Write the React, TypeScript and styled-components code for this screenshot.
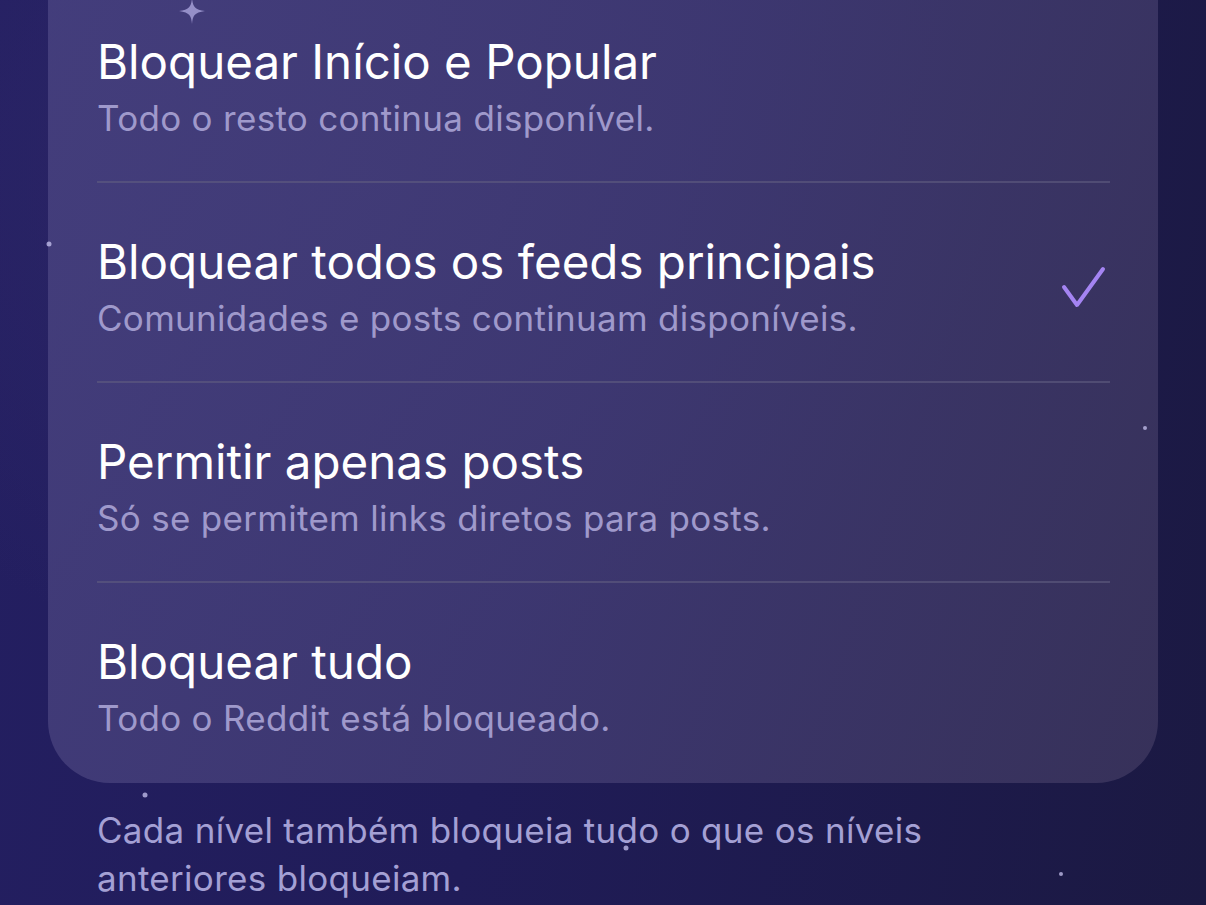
import React from "react";
import styled, { createGlobalStyle } from "styled-components";

const Global = createGlobalStyle`
  html, body { margin: 0; padding: 0; }
  body {
    width: 1206px;
    height: 905px;
    overflow: hidden;
    font-family: Inter, "Noto Sans", "Liberation Sans", sans-serif;
    -webkit-font-smoothing: antialiased;
  }
`;

const Screen = styled.div`
  position: relative;
  width: 1206px;
  height: 905px;
  overflow: hidden;
  background:
    radial-gradient(ellipse 900px 700px at 30% 20%, #2d2768 0%, rgba(45,39,104,0) 70%),
    linear-gradient(100deg, #241f62 0%, #201c58 45%, #1b1942 100%);
`;

const Content = styled.div`
  display: flex;
  flex-direction: column;
  gap: 23px;
  padding: 0 48px;
  margin-top: -17px;
`;

const Card = styled.div`
  border-radius: 0 0 62px 62px;
  background: linear-gradient(110deg, rgba(72, 66, 128, 0.85) 0%, rgba(65, 59, 116, 0.85) 50%, rgba(58, 52, 92, 0.9) 100%);
  padding: 0 48px 2px 49px;
`;

const Row = styled.div<{ $last?: boolean }>`
  display: flex;
  align-items: center;
  justify-content: space-between;
  padding: 54px 0 40px 0;
  border-bottom: ${(p) => (p.$last ? "none" : "2px solid rgba(96, 94, 128, 0.6)")};
`;

const Texts = styled.div`
  display: flex;
  flex-direction: column;
  gap: 8px;
`;

const Title = styled.div`
  font-size: 47.5px;
  line-height: 50px;
  color: #ffffff;
`;

const Subtitle = styled.div`
  font-size: 35px;
  line-height: 46px;
  color: #9f99cb;
  letter-spacing: 0.3px;
`;

const Check = styled.svg`
  width: 48px;
  height: 48px;
  margin-right: 4px;
  flex-shrink: 0;
`;

const Footer = styled.p`
  margin: 0 0 0 49px;
  width: 900px;
  font-size: 35px;
  line-height: 48px;
  color: #a4a0d4;
  letter-spacing: 0.3px;
`;

const Dot = styled.div<{ $x: number; $y: number; $s?: number }>`
  position: absolute;
  left: ${(p) => p.$x}px;
  top: ${(p) => p.$y}px;
  width: ${(p) => p.$s ?? 5}px;
  height: ${(p) => p.$s ?? 5}px;
  border-radius: 50%;
  background: rgba(200, 196, 240, 0.75);
  transform: translate(-50%, -50%);
`;

const Sparkle = styled.svg`
  position: absolute;
  left: 179px;
  top: -2px;
  width: 26px;
  height: 26px;
`;

const items = [
  { title: "Bloquear Início e Popular", sub: "Todo o resto continua disponível.", checked: false },
  { title: "Bloquear todos os feeds principais", sub: "Comunidades e posts continuam disponíveis.", checked: true },
  { title: "Permitir apenas posts", sub: "Só se permitem links diretos para posts.", checked: false },
  { title: "Bloquear tudo", sub: "Todo o Reddit está bloqueado.", checked: false },
];

const stars = [
  { x: 49, y: 244, s: 5 },
  { x: 145, y: 795, s: 5 },
  { x: 1145, y: 428, s: 4 },
  { x: 626, y: 848, s: 5 },
  { x: 1061, y: 874, s: 4 },
];

export default function App() {
  return (
    <>
      <Global />
      <Screen>
        <Content>
          <Card>
            {items.map((it, i) => (
              <Row key={it.title} $last={i === items.length - 1}>
                <Texts>
                  <Title>{it.title}</Title>
                  <Subtitle>{it.sub}</Subtitle>
                </Texts>
                {it.checked && (
                  <Check viewBox="0 0 48 48">
                    <path d="M6 22 L19 40 L45 4" fill="none" stroke="#a484f2" strokeWidth="4" strokeLinecap="round" strokeLinejoin="round" />
                  </Check>
                )}
              </Row>
            ))}
          </Card>
          <Footer>Cada nível também bloqueia tudo o que os níveis anteriores bloqueiam.</Footer>
        </Content>
        <Sparkle viewBox="0 0 26 26">
          <path d="M13 0 C13.8 8 15 11.5 26 13 C15 14.5 13.8 18 13 26 C12.2 18 11 14.5 0 13 C11 11.5 12.2 8 13 0 Z" fill="rgba(170,164,220,0.8)" />
        </Sparkle>
        {stars.map((s) => (
          <Dot key={`${s.x}-${s.y}`} $x={s.x} $y={s.y} $s={s.s} />
        ))}
      </Screen>
    </>
  );
}
